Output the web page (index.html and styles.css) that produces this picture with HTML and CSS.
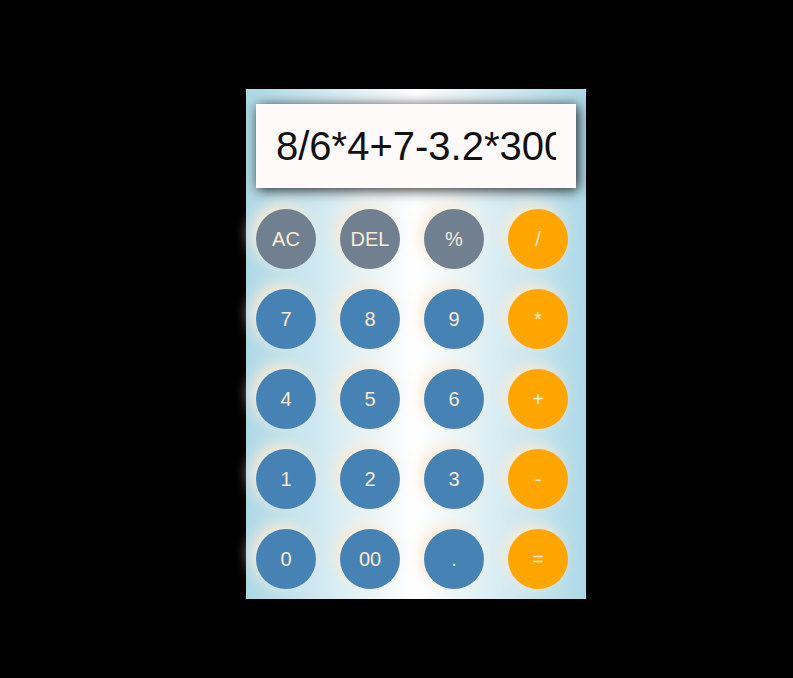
FILE: index.html
```html
<!DOCTYPE html>
<html>
<head>
<meta charset="utf-8">
<link rel="stylesheet" href="styles.css">
</head>
<body>
<div class="page">
  <div class="calc">
    <div class="display"><span class="expr">8/6*4+7-3.2*300</span></div>
    <div class="keys">
      <div class="key gray">AC</div>
      <div class="key gray">DEL</div>
      <div class="key gray">%</div>
      <div class="key op">/</div>
      <div class="key num">7</div>
      <div class="key num">8</div>
      <div class="key num">9</div>
      <div class="key op">*</div>
      <div class="key num">4</div>
      <div class="key num">5</div>
      <div class="key num">6</div>
      <div class="key op">+</div>
      <div class="key num">1</div>
      <div class="key num">2</div>
      <div class="key num">3</div>
      <div class="key op">-</div>
      <div class="key num">0</div>
      <div class="key num">00</div>
      <div class="key num">.</div>
      <div class="key op">=</div>
    </div>
  </div>
</div>
</body>
</html>
```
FILE: styles.css
```css
html, body {
  margin: 0;
  padding: 0;
  background: #000;
  height: 100%;
}
.page {
  padding: 89px 0 0 246px;
}
.calc {
  width: 340px;
  height: 510px;
  box-sizing: border-box;
  padding: 15px 10px 10px 10px;
  background: linear-gradient(to right, lightblue, #ffffff, lightblue);
  font-family: "Liberation Sans", Arial, sans-serif;
}
.display {
  width: 320px;
  height: 84px;
  box-sizing: border-box;
  padding: 0 20px;
  background: #fffafa;
  box-shadow: 2px 2px 12px rgba(0,0,0,0.85);
  display: flex;
  align-items: center;
  overflow: hidden;
  white-space: nowrap;
}
.expr {
  font-size: 40px;
  color: #111;
  overflow: hidden;
  display: block;
  width: 100%;
}
.keys {
  margin-top: 21px;
  display: grid;
  grid-template-columns: repeat(4, 60px);
  grid-auto-rows: 60px;
  column-gap: 24px;
  row-gap: 20px;
}
.key {
  width: 60px;
  height: 60px;
  border-radius: 50%;
  display: flex;
  align-items: center;
  justify-content: center;
  font-size: 20px;
  color: antiquewhite;
  box-shadow: -5px -5px 15px antiquewhite;
}
.gray { background: slategray; }
.num { background: steelblue; }
.op { background: orange; }
```
